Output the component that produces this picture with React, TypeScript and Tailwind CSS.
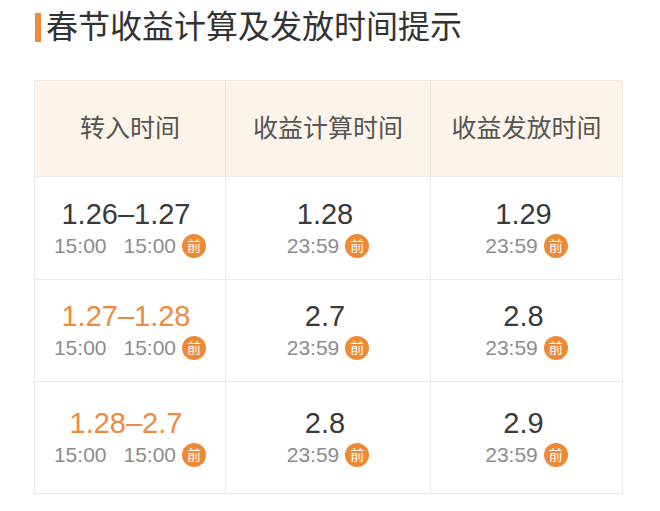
const rows = [
  { range: '1.26–1.27', from: '15:00', to: '15:00', hot: false, calc: '1.28', pay: '1.29', h: 'h-[103px]' },
  { range: '1.27–1.28', from: '15:00', to: '15:00', hot: true, calc: '2.7', pay: '2.8', h: 'h-[102px]' },
  { range: '1.28–2.7', from: '15:00', to: '15:00', hot: true, calc: '2.8', pay: '2.9', h: 'h-[112px]' },
];

function Before() {
  return (
    <span className="ml-[6px] inline-flex h-[24px] w-[24px] items-center justify-center rounded-full bg-[#ee8a36] text-[14px] leading-none text-white">
      前
    </span>
  );
}

function Sub({ children }: { children: React.ReactNode }) {
  return (
    <div className="mt-[1px] flex items-center justify-center text-[21px] leading-[28px] text-[#8c8c8c]">
      {children}
      <Before />
    </div>
  );
}

export default function App() {
  return (
    <div
      className="h-[511px] w-[660px] bg-white"
      style={{ fontFamily: '"Liberation Sans", "Noto Sans CJK SC", sans-serif' }}
    >
      <div className="flex items-center pl-[35px] pt-[11px]">
        <span className="h-[29px] w-[6px] bg-[#f08a3e]" />
        <h1 className="ml-[5px] text-[32px] leading-[32px] text-[#333]">春节收益计算及发放时间提示</h1>
      </div>

      <div className="ml-[34px] mt-[37px] w-[589px] border border-[#ece8e3]">
        <div className="grid h-[95px] grid-cols-[191px_205px_1fr] bg-[#fdf4e9] text-[25px] text-[#555]">
          <div className="flex items-center justify-center border-r border-[#ede3d6]">转入时间</div>
          <div className="flex items-center justify-center border-r border-[#ede3d6]">收益计算时间</div>
          <div className="flex items-center justify-center">收益发放时间</div>
        </div>
        {rows.map((r, i) => (
          <div key={i} className={`grid grid-cols-[191px_205px_1fr] border-t border-[#ece8e3] ${r.h}`}>
            <div className="flex flex-col items-center justify-center border-r border-[#ece8e3]">
              <div className={`pr-[8px] text-[29px] leading-[34px] ${r.hot ? 'text-[#ef8a3e]' : 'text-[#3a3a3a]'}`}>{r.range}</div>
              <Sub>
                <span>{r.from}</span>
                <span className="ml-[17px]">{r.to}</span>
              </Sub>
            </div>
            <div className="flex flex-col items-center justify-center border-r border-[#ece8e3]">
              <div className="pr-[6px] text-[29px] leading-[34px] text-[#3a3a3a]">{r.calc}</div>
              <Sub>23:59</Sub>
            </div>
            <div className="flex flex-col items-center justify-center">
              <div className="pr-[6px] text-[29px] leading-[34px] text-[#3a3a3a]">{r.pay}</div>
              <Sub>23:59</Sub>
            </div>
          </div>
        ))}
      </div>
    </div>
  );
}
